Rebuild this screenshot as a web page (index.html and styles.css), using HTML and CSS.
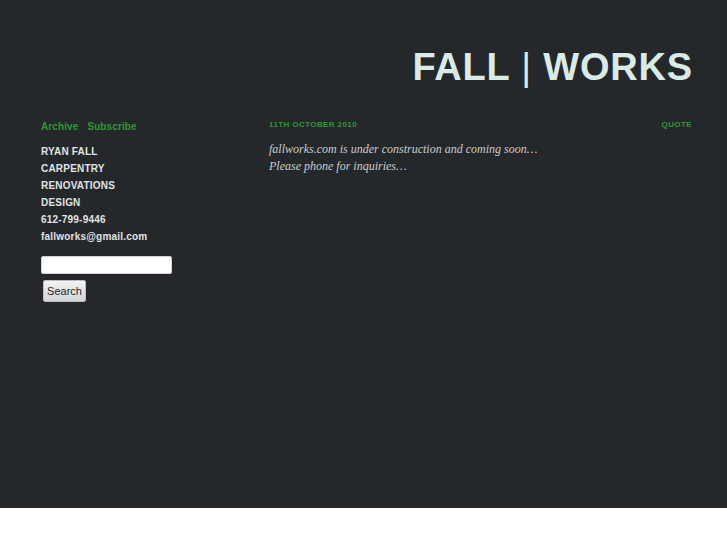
FILE: index.html
```html
<!DOCTYPE html>
<html>
<head>
<meta charset="utf-8">
<title>FALL | WORKS</title>
<link rel="stylesheet" href="styles.css">
</head>
<body>
<div class="page">
  <header class="masthead">
    <h1 class="title">FALL <span class="pipe">|</span> WORKS</h1>
  </header>
  <div class="columns">
    <aside class="sidebar">
      <nav class="links">
        <a href="#">Archive</a>
        <a href="#">Subscribe</a>
      </nav>
      <ul class="info">
        <li>RYAN FALL</li>
        <li>CARPENTRY</li>
        <li>RENOVATIONS</li>
        <li>DESIGN</li>
        <li>612-799-9446</li>
        <li>fallworks@gmail.com</li>
      </ul>
      <form class="search">
        <input class="search-input" type="text">
        <button class="search-btn" type="button">Search</button>
      </form>
    </aside>
    <main class="content">
      <div class="post-meta">
        <span class="date">11TH OCTOBER 2010</span>
        <span class="type">QUOTE</span>
      </div>
      <p class="quote">fallworks.com is under construction and coming soon…<br>Please phone for inquiries…</p>
    </main>
  </div>
</div>
</body>
</html>
```
FILE: styles.css
```css
html, body {
  margin: 0;
  padding: 0;
  background: #ffffff;
}
.page {
  background: #25282b;
  height: 508px;
  font-family: "Liberation Sans", Arial, sans-serif;
  color: #dfe4e4;
}
.masthead {
  display: flex;
  justify-content: flex-end;
  padding: 45px 34px 0 0;
}
.title {
  margin: 0;
  font-size: 38px;
  line-height: 44px;
  font-weight: bold;
  color: #d9ebe7;
  letter-spacing: 0.8px;
}
.pipe {
  font-weight: normal;
}
.columns {
  display: flex;
  align-items: flex-start;
  margin-top: 27px;
  padding-left: 41px;
  padding-right: 35px;
}
.sidebar {
  width: 228px;
  padding-top: 2px;
}
.links {
  display: flex;
  gap: 9px;
  font-size: 10px;
  line-height: 17px;
  font-weight: bold;
  letter-spacing: 0.1px;
}
.links a {
  color: #2b9a2f;
  text-decoration: none;
}
.info {
  list-style: none;
  margin: 8px 0 0;
  padding: 0;
  font-size: 10px;
  line-height: 17px;
  font-weight: bold;
  letter-spacing: 0.2px;
  color: #e0e4e4;
}
.search {
  display: flex;
  flex-direction: column;
  align-items: flex-start;
  margin-top: 11px;
}
.search-input {
  width: 131px;
  height: 18px;
  box-sizing: border-box;
  margin: 0;
  border: 1px solid #cfd3d3;
  border-radius: 2px;
  background: #ffffff;
  padding: 0 3px;
}
.search-btn {
  margin: 6px 0 0 2px;
  width: 43px;
  height: 22px;
  padding: 0;
  border: 1px solid #b9bcbe;
  border-radius: 2px;
  background: linear-gradient(#f2f2f2, #d4d5d6);
  font-family: "Liberation Sans", Arial, sans-serif;
  font-size: 11px;
  color: #1e1e1e;
}
.content {
  flex: 1;
}
.post-meta {
  display: flex;
  justify-content: space-between;
  font-size: 8px;
  line-height: 17px;
  font-weight: bold;
  letter-spacing: 0.4px;
  color: #2b9a2f;
}
.quote {
  margin: 8px 0 0;
  font-family: "Liberation Serif", "Times New Roman", serif;
  font-style: italic;
  font-size: 12px;
  line-height: 17px;
  color: #c9cdcd;
}
```
